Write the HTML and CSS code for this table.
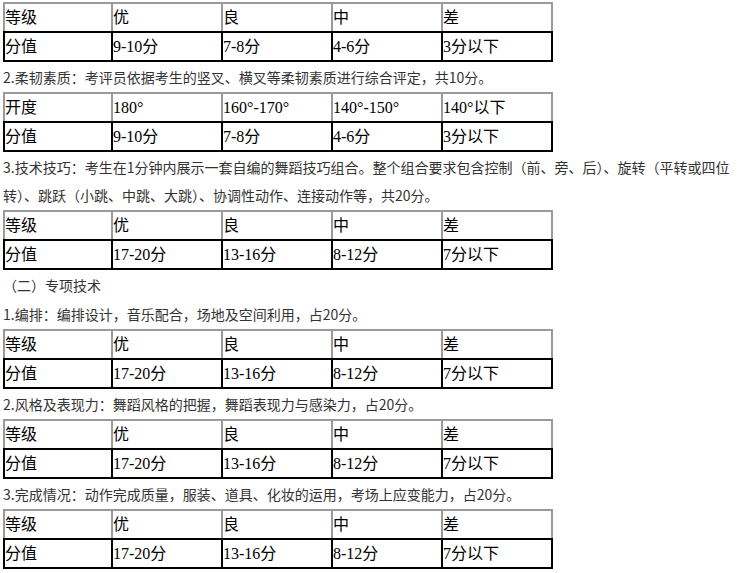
FILE: index.html
```html
<!DOCTYPE html>
<html lang="zh">
<head>
<meta charset="utf-8">
<title>评分标准</title>
<link rel="stylesheet" href="styles.css">
</head>
<body>
<div class="page">
  <table class="grade">
    <tr class="head"><td>等级</td><td>优</td><td>良</td><td>中</td><td>差</td></tr>
    <tr class="val"><td>分值</td><td>9-10分</td><td>7-8分</td><td>4-6分</td><td>3分以下</td></tr>
  </table>
  <p class="note">2.柔韧素质：考评员依据考生的竖叉、横叉等柔韧素质进行综合评定，共10分。</p>
  <table class="grade">
    <tr class="head"><td>开度</td><td>180°</td><td>160°-170°</td><td>140°-150°</td><td>140°以下</td></tr>
    <tr class="val"><td>分值</td><td>9-10分</td><td>7-8分</td><td>4-6分</td><td>3分以下</td></tr>
  </table>
  <p class="note">3.技术技巧：考生在1分钟内展示一套自编的舞蹈技巧组合。整个组合要求包含控制（前、旁、后）、旋转（平转或四位转）、跳跃（小跳、中跳、大跳）、协调性动作、连接动作等，共20分。</p>
  <table class="grade">
    <tr class="head"><td>等级</td><td>优</td><td>良</td><td>中</td><td>差</td></tr>
    <tr class="val"><td>分值</td><td>17-20分</td><td>13-16分</td><td>8-12分</td><td>7分以下</td></tr>
  </table>
  <p class="note">（二）专项技术</p>
  <p class="note">1.编排：编排设计，音乐配合，场地及空间利用，占20分。</p>
  <table class="grade">
    <tr class="head"><td>等级</td><td>优</td><td>良</td><td>中</td><td>差</td></tr>
    <tr class="val"><td>分值</td><td>17-20分</td><td>13-16分</td><td>8-12分</td><td>7分以下</td></tr>
  </table>
  <p class="note">2.风格及表现力：舞蹈风格的把握，舞蹈表现力与感染力，占20分。</p>
  <table class="grade">
    <tr class="head"><td>等级</td><td>优</td><td>良</td><td>中</td><td>差</td></tr>
    <tr class="val"><td>分值</td><td>17-20分</td><td>13-16分</td><td>8-12分</td><td>7分以下</td></tr>
  </table>
  <p class="note">3.完成情况：动作完成质量，服装、道具、化妆的运用，考场上应变能力，占20分。</p>
  <table class="grade">
    <tr class="head"><td>等级</td><td>优</td><td>良</td><td>中</td><td>差</td></tr>
    <tr class="val"><td>分值</td><td>17-20分</td><td>13-16分</td><td>8-12分</td><td>7分以下</td></tr>
  </table>
</div>
</body>
</html>
```
FILE: styles.css
```css
html, body {
  margin: 0;
  padding: 0;
  background: #ffffff;
}

.page {
  width: 740px;
  padding: 1px 3px 0 3px;
}

.grade {
  border-collapse: separate;
  border-spacing: 0;
  table-layout: fixed;
  width: 550px;
  margin: 1px 0;
  font-family: "Liberation Serif", "Noto Sans CJK SC", serif;
  font-size: 16px;
  color: #000;
}

.grade td {
  box-sizing: border-box;
  width: 110px;
  height: 29px;
  padding: 0;
  vertical-align: middle;
  text-align: left;
  line-height: 20px;
  white-space: nowrap;
}

.grade .head td {
  height: 29px;
  border-top: 2px solid #9a9a9a;
  border-right: 2px solid #9a9a9a;
}

.grade .head td:first-child {
  border-left: 2px solid #9a9a9a;
}

.grade .val td {
  height: 31px;
  border-top: 2px solid #000;
  border-bottom: 2px solid #000;
  border-right: 2px solid #000;
}

.grade .val td:first-child {
  border-left: 2px solid #000;
}

.note {
  margin: 1px 0;
  font-family: "Noto Sans CJK SC", "Noto Sans", sans-serif;
  font-size: 14px;
  line-height: 28px;
  color: #333;
}
```
